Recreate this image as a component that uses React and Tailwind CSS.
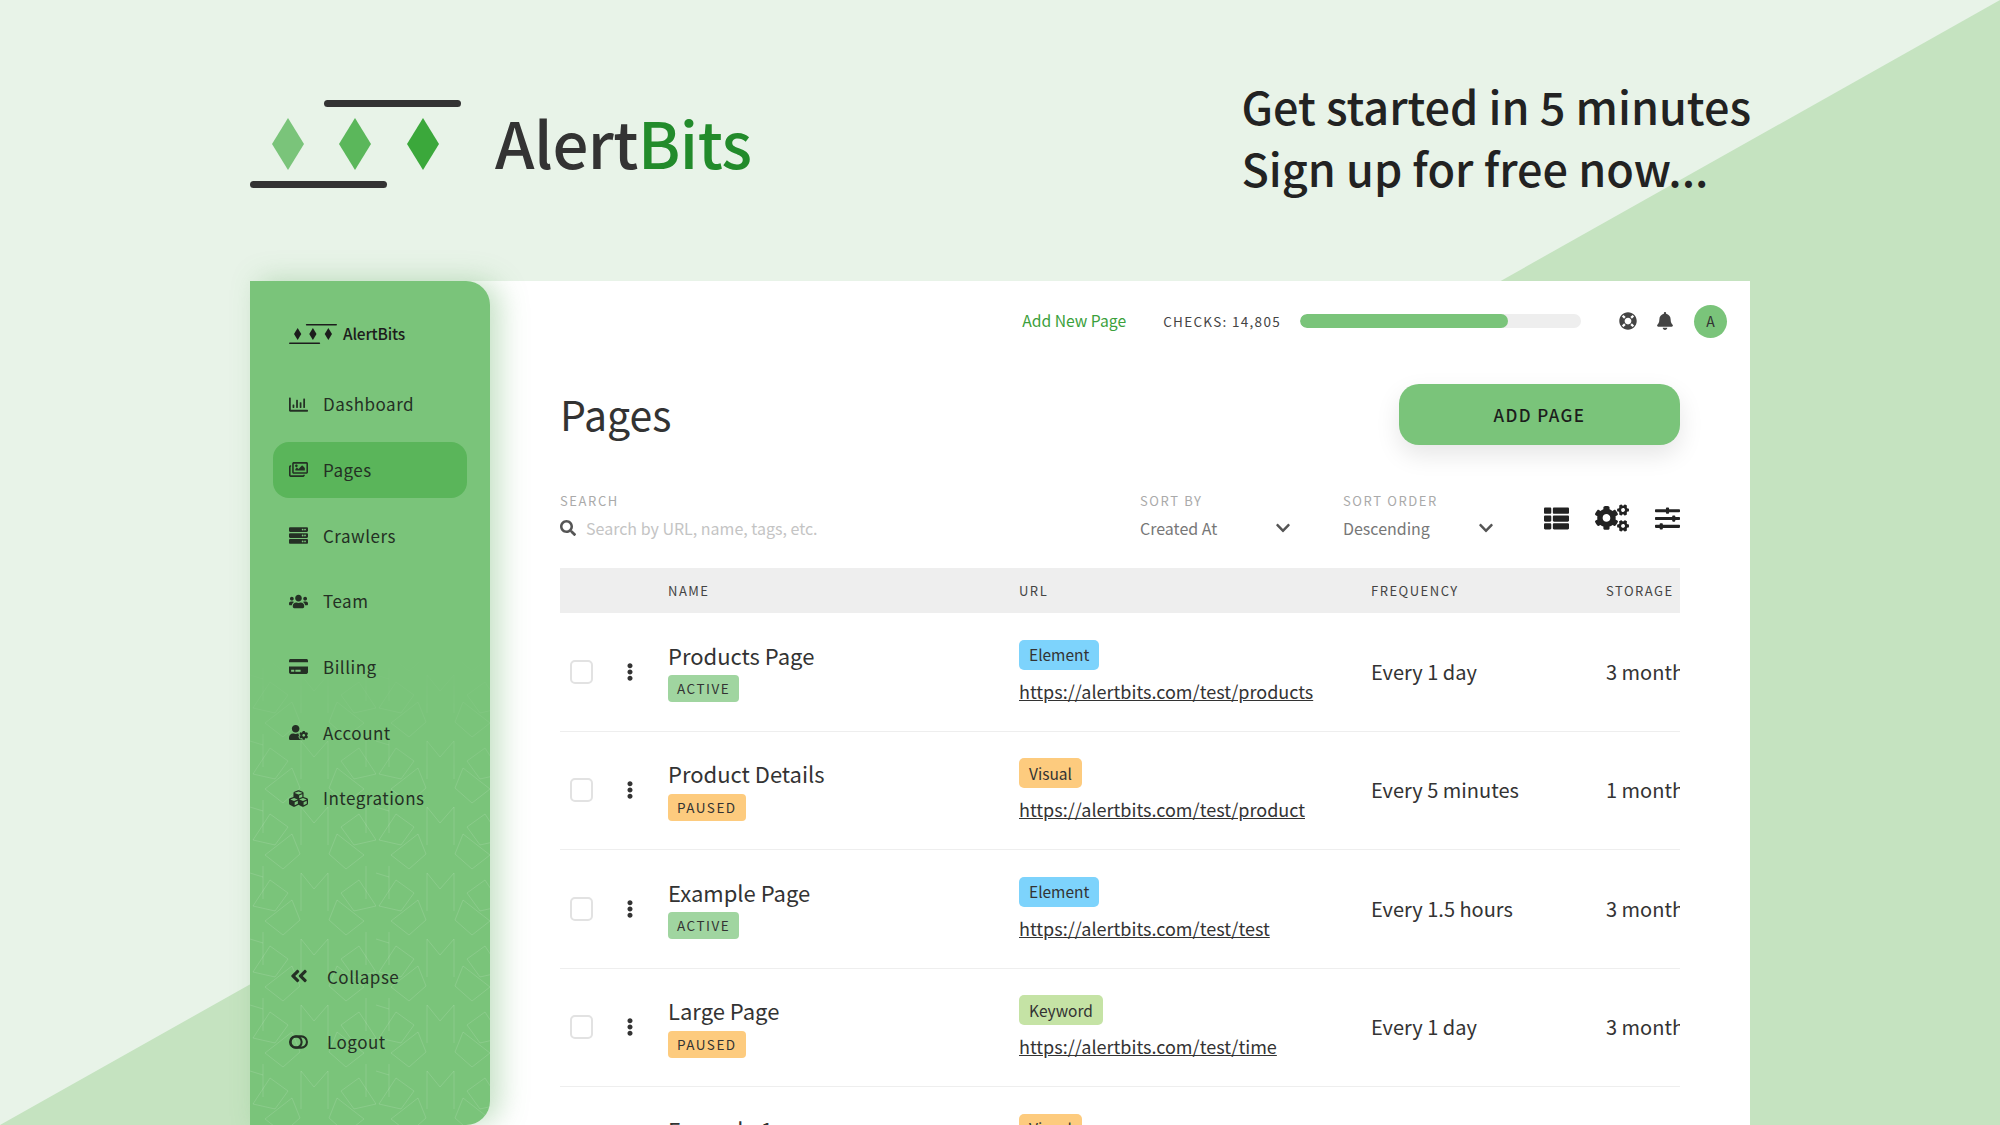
import {
  FaRegChartBar,
  FaRegImages,
  FaServer,
  FaUsers,
  FaCreditCard,
  FaUserCog,
  FaCubes,
  FaAngleDoubleLeft,
  FaLifeRing,
  FaBell,
  FaSearch,
  FaChevronDown,
  FaThList,
  FaCogs,
  FaSlidersH,
  FaEllipsisV,
} from "react-icons/fa";

const navItems = [
  { label: "Dashboard", icon: FaRegChartBar },
  { label: "Pages", icon: FaRegImages, active: true },
  { label: "Crawlers", icon: FaServer },
  { label: "Team", icon: FaUsers },
  { label: "Billing", icon: FaCreditCard },
  { label: "Account", icon: FaUserCog },
  { label: "Integrations", icon: FaCubes },
];

const rows = [
  { name: "Products Page", status: "ACTIVE", tag: "Element", url: "https://alertbits.com/test/products", freq: "Every 1 day", storage: "3 months" },
  { name: "Product Details", status: "PAUSED", tag: "Visual", url: "https://alertbits.com/test/product", freq: "Every 5 minutes", storage: "1 month" },
  { name: "Example Page", status: "ACTIVE", tag: "Element", url: "https://alertbits.com/test/test", freq: "Every 1.5 hours", storage: "3 months" },
  { name: "Large Page", status: "PAUSED", tag: "Keyword", url: "https://alertbits.com/test/time", freq: "Every 1 day", storage: "3 months" },
  { name: "Example 1", status: "ACTIVE", tag: "Visual", url: "https://alertbits.com/test/example", freq: "Every 1 day", storage: "3 months" },
];

const tagColors = {
  Element: "bg-[#7dd3fc]",
  Visual: "bg-[#fdcb7e]",
  Keyword: "bg-[#c5e3a5]",
};

const statusColors = {
  ACTIVE: "bg-[#a0d5a0]",
  PAUSED: "bg-[#fdcb7e]",
};

function LogoMark({ className, light, mid, dark, bar }) {
  return (
    <svg viewBox="0 0 211 88" className={className}>
      <rect x="74" y="0" width="137" height="7" rx="3.5" fill={bar} />
      <polygon points="38,18 54,44 38,70 22,44" fill={light} />
      <polygon points="105,18 121,44 105,70 89,44" fill={mid} />
      <polygon points="173,18 189,44 173,70 157,44" fill={dark} />
      <rect x="0" y="81" width="137" height="7" rx="3.5" fill={bar} />
    </svg>
  );
}

function LogoutIcon({ className }) {
  return (
    <svg viewBox="0 0 20 14" className={className} fill="none" stroke="currentColor" strokeWidth="2.2">
      <rect x="1.1" y="1.1" width="17.8" height="11.8" rx="5.9" />
      <circle cx="7.5" cy="7" r="5.8" />
    </svg>
  );
}

function SidebarPattern() {
  return (
    <svg className="absolute left-0 bottom-0 w-full h-[470px] pointer-events-none" viewBox="0 0 240 470">
      <defs>
        <pattern id="stars" width="126" height="66" patternUnits="userSpaceOnUse">
          <g fill="none" stroke="#ffffff" strokeOpacity="0.12" strokeWidth="1" strokeLinejoin="round">
            <polygon points="20,27 38,40 25,58 3,53" />
            <polygon points="42,47 50,67 33,82 15,68" />
            <polygon points="42,-19 50,1 33,16 15,2" />
            <polygon points="109,27 91,40 104,58 126,53" />
            <polygon points="87,47 79,67 96,82 114,68" />
            <polygon points="87,-19 79,1 96,16 114,2" />
            <path d="M13 13 V46 M51 20 V58 M116 13 V46 M78 20 V58 M51 20 L64 36 L78 20 M0 20 L13 24" />
          </g>
        </pattern>
        <linearGradient id="fade" x1="0" y1="0" x2="0" y2="1">
          <stop offset="0" stopColor="#fff" stopOpacity="0" />
          <stop offset="0.3" stopColor="#fff" stopOpacity="1" />
        </linearGradient>
        <mask id="fadeMask">
          <rect width="240" height="470" fill="url(#fade)" />
        </mask>
      </defs>
      <rect width="240" height="470" fill="url(#stars)" mask="url(#fadeMask)" />
    </svg>
  );
}

function Sidebar() {
  return (
    <aside className="relative z-10 w-[240px] shrink-0 h-[844px] bg-[#7ac47a] rounded-r-[24px] shadow-[10px_0_28px_rgba(90,170,90,0.35)] flex flex-col px-[23px] overflow-hidden">
      <SidebarPattern />
      <div className="relative flex items-center gap-[6px] pl-[16px] h-[24px] mt-[41px] text-[#1c1c1c]">
        <LogoMark className="w-[48px] h-[22px]" light="#1c1c1c" mid="#1c1c1c" dark="#1c1c1c" bar="#1c1c1c" />
        <span className="text-[15.5px] font-medium leading-none tracking-[-0.2px]">AlertBits</span>
      </div>
      <nav className="relative flex flex-col gap-[9.7px] mt-[30px]">
        {navItems.map((item) => {
          const Icon = item.icon;
          return (
            <div
              key={item.label}
              className={`flex items-center h-[56px] rounded-[16px] pl-[16px] gap-[15px] text-[#243024] ${item.active ? "bg-[#5ab55a]" : ""}`}
            >
              <Icon className="w-[19px] h-[19px]" />
              <span className="text-[17px] tracking-[0.5px]">{item.label}</span>
            </div>
          );
        })}
      </nav>
      <div className="relative flex flex-col gap-[9.7px] mt-auto mb-[55px]">
        <div className="flex items-center h-[56px] pl-[16px] gap-[18px] text-[#243024]">
          <FaAngleDoubleLeft className="w-[20px] h-[20px]" />
          <span className="text-[17px] tracking-[0.5px]">Collapse</span>
        </div>
        <div className="flex items-center h-[56px] pl-[16px] gap-[19px] text-[#243024]">
          <LogoutIcon className="w-[19px] h-[14px]" />
          <span className="text-[17px] tracking-[0.5px]">Logout</span>
        </div>
      </div>
    </aside>
  );
}

function TopBar() {
  return (
    <div className="h-[80px] shrink-0 flex items-center justify-end pr-[23px]">
      <a className="text-[15.7px] text-[#3ba03b] mr-[37px]">Add New Page</a>
      <span className="text-[13.5px] tracking-[1.3px] text-[#444] mr-[19px]">CHECKS: 14,805</span>
      <div className="w-[281px] h-[14px] rounded-full bg-[#eeeeee] mr-[38px] overflow-hidden">
        <div className="w-[208px] h-full rounded-full bg-[#7ac47a]" />
      </div>
      <FaLifeRing className="w-[18px] h-[18px] text-[#444] mr-[19px]" />
      <FaBell className="w-[18px] h-[18px] text-[#444] mr-[20px]" />
      <div className="w-[33px] h-[33px] rounded-full bg-[#7ac47a] flex items-center justify-center text-[14px] text-[#333]">A</div>
    </div>
  );
}

function Filter({ label, value, className }) {
  return (
    <div className={className}>
      <div className="text-[13px] leading-[18px] tracking-[1.6px] text-[#aaaaaa]">{label}</div>
      <div className="flex items-center justify-between mt-[6px] h-[24px] text-[#777]">
        <span className="text-[16px]">{value}</span>
        <FaChevronDown className="w-[16px] h-[16px] text-[#555]" />
      </div>
    </div>
  );
}

function Row({ row }) {
  return (
    <div className="grid grid-cols-[108px_351px_352px_235px_1fr] items-center h-[118.5px] shrink-0 border-b border-[#eeeeee] text-[#333]">
      <div className="flex items-center">
        <span className="ml-[10px] w-[23px] h-[24px] rounded-[5px] border-2 border-[#e2e2e2] bg-white" />
        <FaEllipsisV className="ml-[30px] w-[14px] h-[18px] text-[#333]" />
      </div>
      <div className="flex flex-col items-start mb-[3px]">
        <span className="text-[22px] leading-[32px]">{row.name}</span>
        <span className={`mt-[4.5px] h-[27px] px-[9px] flex items-center rounded-[4px] text-[13.5px] tracking-[1.5px] ${statusColors[row.status]}`}>{row.status}</span>
      </div>
      <div className="flex flex-col items-start mt-[1px]">
        <span className={`h-[30px] px-[10px] flex items-center rounded-[5px] text-[15.5px] ${tagColors[row.tag]}`}>{row.tag}</span>
        <a className="mt-[7px] text-[18px] leading-[28px] underline whitespace-nowrap">{row.url}</a>
      </div>
      <span className="text-[20px] whitespace-nowrap">{row.freq}</span>
      <span className="text-[20px] whitespace-nowrap overflow-hidden">{row.storage}</span>
    </div>
  );
}

export default function App() {
  return (
    <div className="relative w-[2000px] h-[1125px] overflow-hidden bg-[#e8f3e8] font-['Noto_Sans_CJK_JP',sans-serif]">
      <svg className="absolute inset-0 w-full h-full" viewBox="0 0 2000 1125">
        <polygon points="2000,0 2000,1125 0,1125" fill="#c5e3c0" />
      </svg>

      <header className="relative h-[281px] pl-[250px] pr-[249px] flex justify-between">
        <div className="flex items-center gap-[34px] h-[287px]">
          <LogoMark className="w-[211px] h-[88px]" light="#7ac47a" mid="#5bb75b" dark="#3ba83b" bar="#333333" />
          <span className="text-[63.5px] font-medium leading-none text-[#333] tracking-[-0.5px] -mt-[3px]">
            Alert<span className="text-[#228b2b]">Bits</span>
          </span>
        </div>
        <div className="pt-[75px] text-[45px] leading-[62px] font-medium text-[#222]">
          <div>Get started in 5 minutes</div>
          <div>Sign up for free now...</div>
        </div>
      </header>

      <div className="relative ml-[250px] w-[1500px] h-[844px] bg-white flex">
        <Sidebar />
        <main className="flex-1 min-w-0 h-[844px] overflow-hidden flex flex-col">
          <TopBar />
          <div className="flex flex-col px-[70px]">
            <div className="flex items-center justify-between mt-[23px] h-[61px] shrink-0">
              <h1 className="text-[41px] leading-none text-[#333] -mt-[2px]">Pages</h1>
              <button className="w-[281px] h-[61px] rounded-[20px] bg-[#7ac47a] text-[17px] font-medium tracking-[1.4px] text-[#1c1c1c] shadow-[0_10px_24px_rgba(0,0,0,0.1)]">ADD PAGE</button>
            </div>

            <div className="flex items-start mt-[47px] h-[76px] shrink-0">
              <div className="w-[580px]">
                <div className="text-[13px] leading-[18px] tracking-[1.6px] text-[#aaaaaa]">SEARCH</div>
                <div className="flex items-center gap-[10px] mt-[6px] h-[24px]">
                  <FaSearch className="w-[16px] h-[16px] text-[#555]" />
                  <span className="text-[16px] text-[#c4c4c4]">Search by URL, name, tags, etc.</span>
                </div>
              </div>
              <Filter label="SORT BY" value="Created At" className="w-[151px] mr-[52px]" />
              <Filter label="SORT ORDER" value="Descending" className="w-[151px]" />
              <div className="flex items-center justify-between flex-1 ml-[50px] mt-[12px] text-[#222]">
                <FaThList className="w-[25px] h-[25px]" />
                <FaCogs className="w-[34px] h-[28px]" />
                <FaSlidersH className="w-[25px] h-[25px]" />
              </div>
            </div>

            <div className="grid grid-cols-[108px_351px_352px_235px_1fr] items-center h-[45px] shrink-0 bg-[#eeeeee] text-[13px] tracking-[1.5px] text-[#444]">
              <span />
              <span>NAME</span>
              <span>URL</span>
              <span>FREQUENCY</span>
              <span>STORAGE</span>
            </div>
            {rows.map((row) => (
              <Row key={row.name} row={row} />
            ))}
          </div>
        </main>
      </div>
    </div>
  );
}
